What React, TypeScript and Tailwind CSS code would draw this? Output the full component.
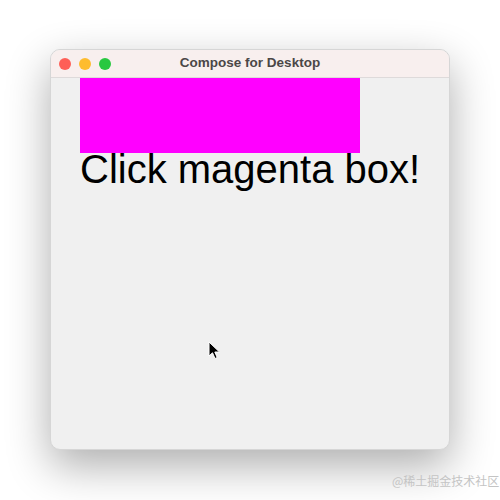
export default function App() {
  return (
    <div className="relative w-[500px] h-[500px] bg-white overflow-hidden" style={{ fontFamily: '"Liberation Sans", Arial, sans-serif' }}>
      <div className="absolute left-[50px] top-[49px] w-[400px] h-[401px] rounded-[10px] bg-[#f0f0f0] border border-[#d6d6d6] overflow-hidden shadow-[0_16px_44px_rgba(0,0,0,0.32)] flex flex-col">
        {/* title bar */}
        <div className="relative h-[28px] shrink-0 bg-[#f8efee] border-b border-[#dedada] flex items-center justify-center">
          <div className="absolute left-[8px] top-[8px] flex gap-[8px]">
            <span className="w-[12px] h-[12px] rounded-full bg-[#fe5f57]" />
            <span className="w-[12px] h-[12px] rounded-full bg-[#febc2e]" />
            <span className="w-[12px] h-[12px] rounded-full bg-[#28c840]" />
          </div>
          <span className="text-[13.5px] font-bold text-[#4b4747]">Compose for Desktop</span>
        </div>
        {/* content */}
        <div className="flex-1 pl-[29px]">
          <div className="w-[280px] h-[75px] bg-[#ff00ff]" />
          <div className="-mt-[4px] text-[40px] leading-[40px] text-black whitespace-nowrap">Click magenta box!</div>
        </div>
      </div>
      <svg className="absolute left-[208px] top-[341px]" width="14" height="20" viewBox="0 0 14 20">
        <path d="M1 1 L1 15 L4.5 11.8 L7 17.5 L9.2 16.5 L6.8 11 L11.5 11 Z" fill="#000" stroke="#fff" strokeWidth="1" strokeLinejoin="round" />
      </svg>
      <div className="absolute left-[392px] top-[472px] text-[12px] text-[#c4c4c4]" style={{ fontFamily: '"Noto Sans CJK SC", sans-serif' }}>@稀土掘金技术社区</div>
    </div>
  )
}
